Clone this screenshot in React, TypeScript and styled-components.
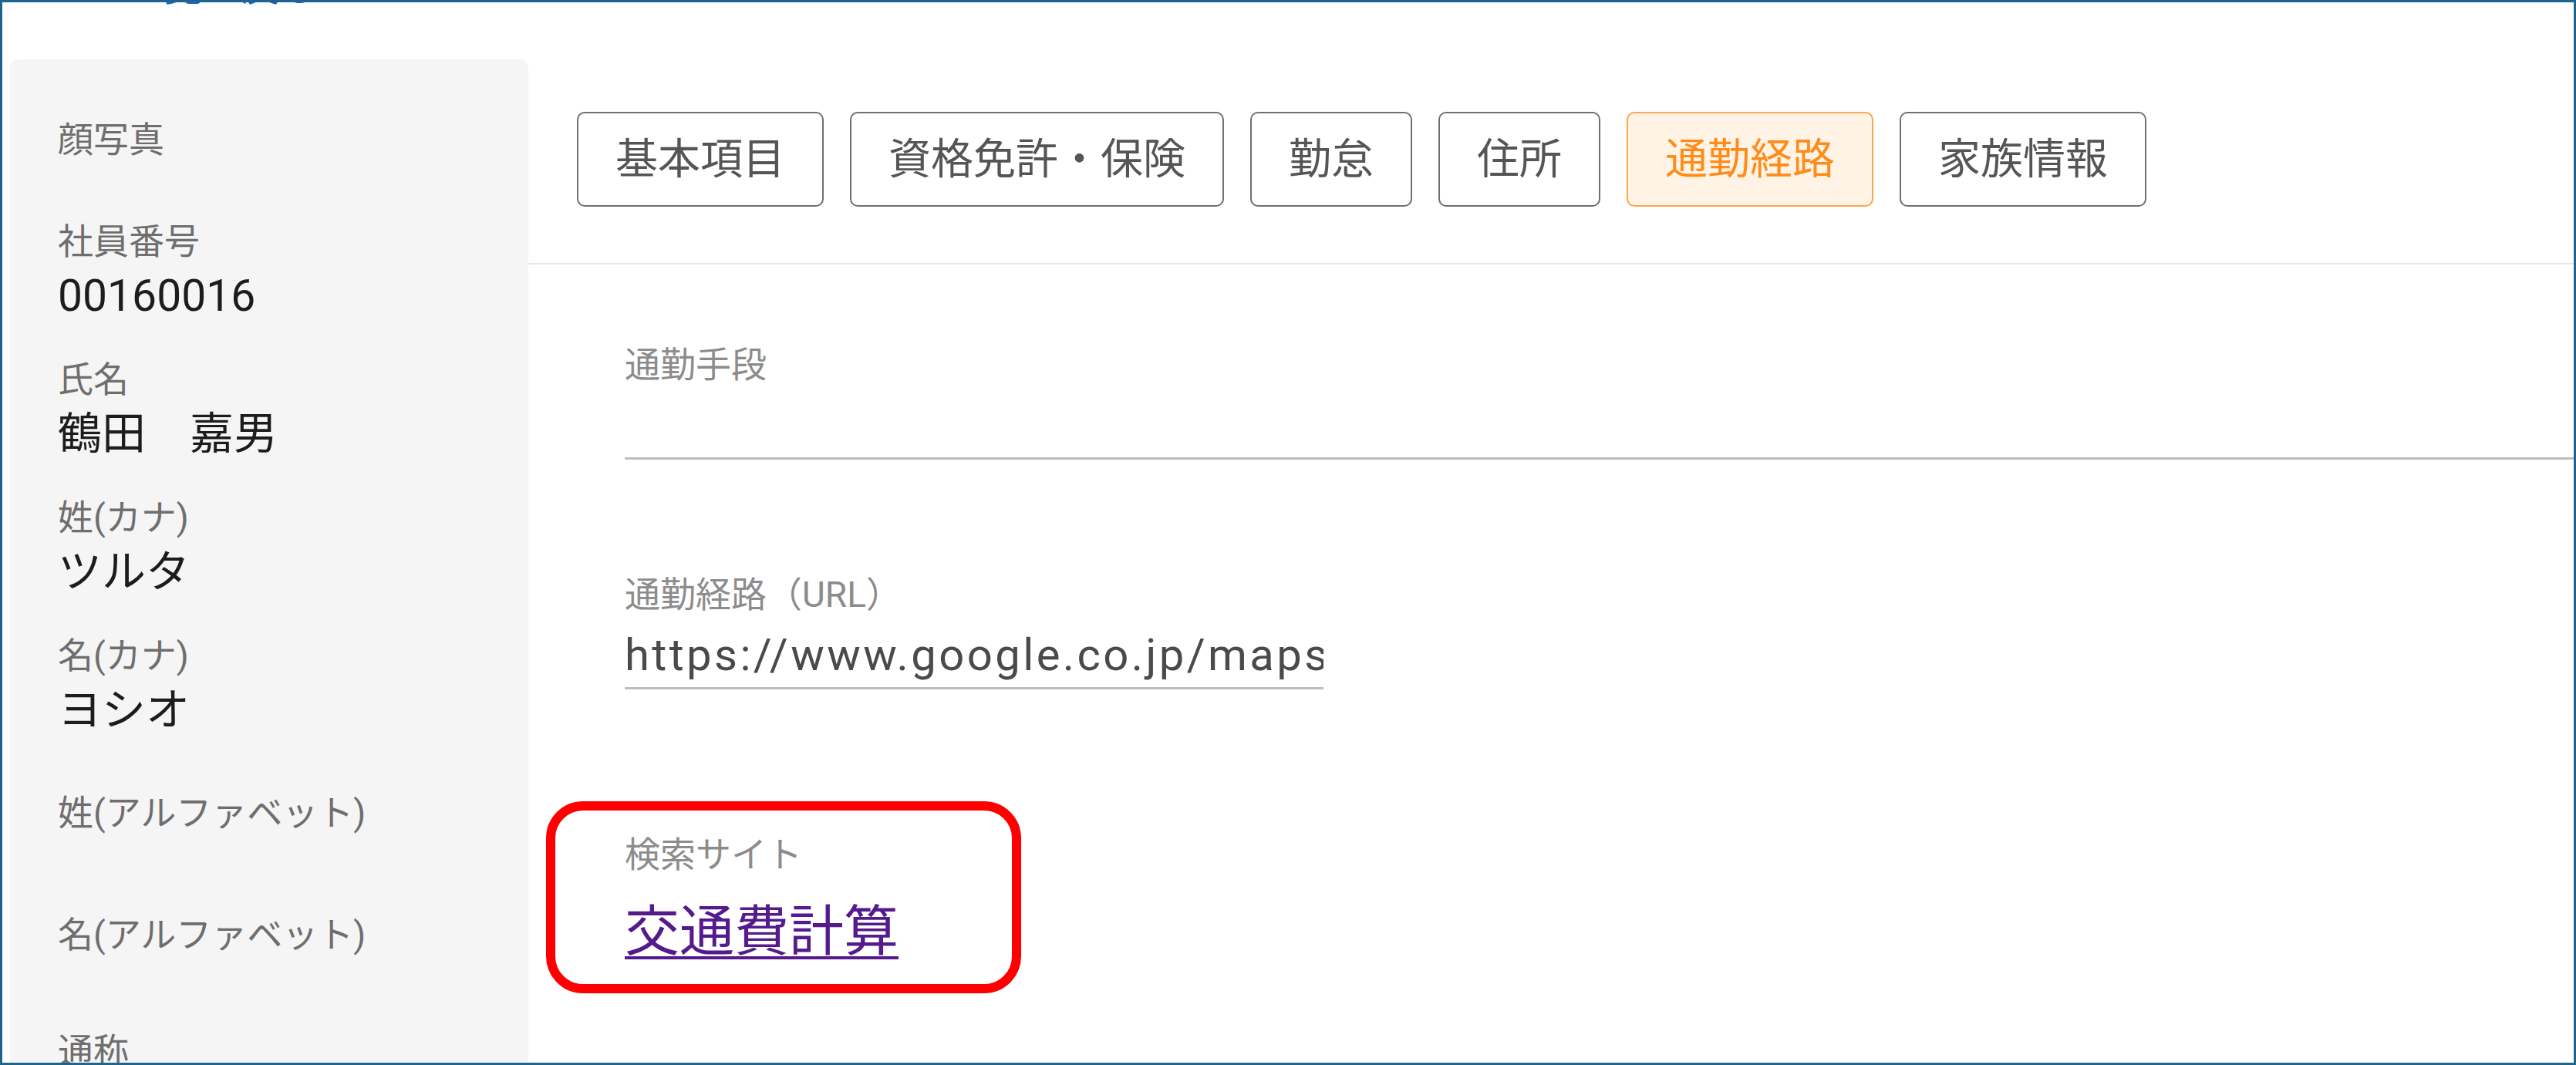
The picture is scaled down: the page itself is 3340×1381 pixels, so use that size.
import styled, { createGlobalStyle } from "styled-components";

const GlobalStyle = createGlobalStyle`
  html, body {
    margin: 0;
    padding: 0;
    background: #ffffff;
  }
  body {
    font-family: Roboto, "Noto Sans CJK JP", sans-serif;
  }
  *, *::before, *::after {
    box-sizing: border-box;
  }
`;

const Frame = styled.div`
  width: 3340px;
  height: 1381px;
  border: 3px solid #1d6590;
  overflow: hidden;
  display: flex;
  flex-direction: column;
  background: #ffffff;
`;

const TopBar = styled.div`
  height: 74px;
  flex-shrink: 0;
  padding-left: 97px;
`;

const BackLink = styled.a`
  display: block;
  margin-top: -49px;
  font-size: 50px;
  line-height: 60px;
  color: #1565c0;
  font-weight: 500;
  text-decoration: none;
  white-space: nowrap;
`;

const Body = styled.div`
  flex: 1;
  display: flex;
  padding-left: 10px;
  min-height: 0;
`;

const Sidebar = styled.aside`
  width: 672px;
  flex-shrink: 0;
  background: #f5f5f5;
  border-radius: 10px 10px 0 0;
  padding: 69px 0 0 62px;
`;

const SideItem = styled.div<{ $h: number }>`
  height: ${(p) => p.$h}px;
`;

const SideLabel = styled.div`
  font-size: 46px;
  line-height: 70px;
  color: #6e6e6e;
  white-space: nowrap;
`;

const SideValue = styled.div`
  font-size: 57px;
  line-height: 72px;
  color: #1c1c1c;
  white-space: pre;
`;

const Main = styled.main`
  flex: 1;
  display: flex;
  flex-direction: column;
  min-width: 0;
`;

const TabBar = styled.nav`
  display: flex;
  gap: 34px;
  padding: 68px 0 73px 63px;
  border-bottom: 2px solid #e8e8e8;
`;

const Tab = styled.button<{ $active?: boolean }>`
  height: 123px;
  padding: 0 48px;
  border-radius: 10px;
  border: 2px solid ${(p) => (p.$active ? "#ffa54a" : "#6f6f6f")};
  background: ${(p) => (p.$active ? "#fff3e5" : "#ffffff")};
  color: ${(p) => (p.$active ? "#ff8c1a" : "#555555")};
  font-family: inherit;
  font-size: 55px;
  line-height: 1;
  white-space: nowrap;
  cursor: pointer;
`;

const Form = styled.div`
  display: flex;
  flex-direction: column;
  padding-left: 125px;
`;

const Field = styled.div<{ $top: number }>`
  display: flex;
  flex-direction: column;
  margin-top: ${(p) => p.$top}px;
`;

const FieldLabel = styled.div`
  font-size: 46px;
  line-height: 50px;
  color: #8c8c8c;
  white-space: nowrap;
`;

const InputLine = styled.div<{ $width?: number }>`
  width: ${(p) => (p.$width ? `${p.$width}px` : "100%")};
  height: 98px;
  padding-top: 14px;
  border-bottom: 3px solid #bdbdbd;
  font-size: 58px;
  line-height: 78px;
  letter-spacing: 3.4px;
  color: #4a4a4a;
  white-space: nowrap;
  overflow: hidden;
`;

const Highlight = styled.div`
  position: relative;
  align-self: flex-start;

  &::before {
    content: "";
    position: absolute;
    left: -102px;
    top: -44px;
    width: 616px;
    height: 249px;
    border: 12px solid #ff0000;
    border-radius: 48px;
    pointer-events: none;
  }
`;

const CalcLink = styled.a`
  display: block;
  margin-top: 30px;
  font-size: 71px;
  line-height: 90px;
  color: #551a8b;
  text-decoration: underline;
  text-decoration-thickness: 4px;
  text-underline-offset: 8px;
  white-space: nowrap;
`;

const sideItems: { label: string; value?: string; h: number }[] = [
  { label: "顔写真", h: 132 },
  { label: "社員番号", value: "00160016", h: 179 },
  { label: "氏名", value: "鶴田　嘉男", h: 179 },
  { label: "姓(カナ)", value: "ツルタ", h: 179 },
  { label: "名(カナ)", value: "ヨシオ", h: 204 },
  { label: "姓(アルファベット)", h: 158 },
  { label: "名(アルファベット)", h: 151 },
  { label: "通称", h: 180 },
];

const tabs = ["基本項目", "資格免許・保険", "勤怠", "住所", "通勤経路", "家族情報"];

export default function App() {
  return (
    <>
      <GlobalStyle />
      <Frame>
        <TopBar>
          <BackLink href="#">＜ 一覧に戻る</BackLink>
        </TopBar>
        <Body>
          <Sidebar>
            {sideItems.map((item) => (
              <SideItem key={item.label} $h={item.h}>
                <SideLabel>{item.label}</SideLabel>
                {item.value && <SideValue>{item.value}</SideValue>}
              </SideItem>
            ))}
          </Sidebar>
          <Main>
            <TabBar>
              {tabs.map((t) => (
                <Tab key={t} $active={t === "通勤経路"}>
                  {t}
                </Tab>
              ))}
            </TabBar>
            <Form>
              <Field $top={105}>
                <FieldLabel>通勤手段</FieldLabel>
                <InputLine />
              </Field>
              <Field $top={150}>
                <FieldLabel>通勤経路（URL）</FieldLabel>
                <InputLine $width={906}>
                  https://www.google.co.jp/maps/dir/%E9%B6%B4%E7%94%B0
                </InputLine>
              </Field>
              <Field $top={189}>
                <Highlight>
                  <FieldLabel>検索サイト</FieldLabel>
                  <CalcLink href="#">交通費計算</CalcLink>
                </Highlight>
              </Field>
            </Form>
          </Main>
        </Body>
      </Frame>
    </>
  );
}
